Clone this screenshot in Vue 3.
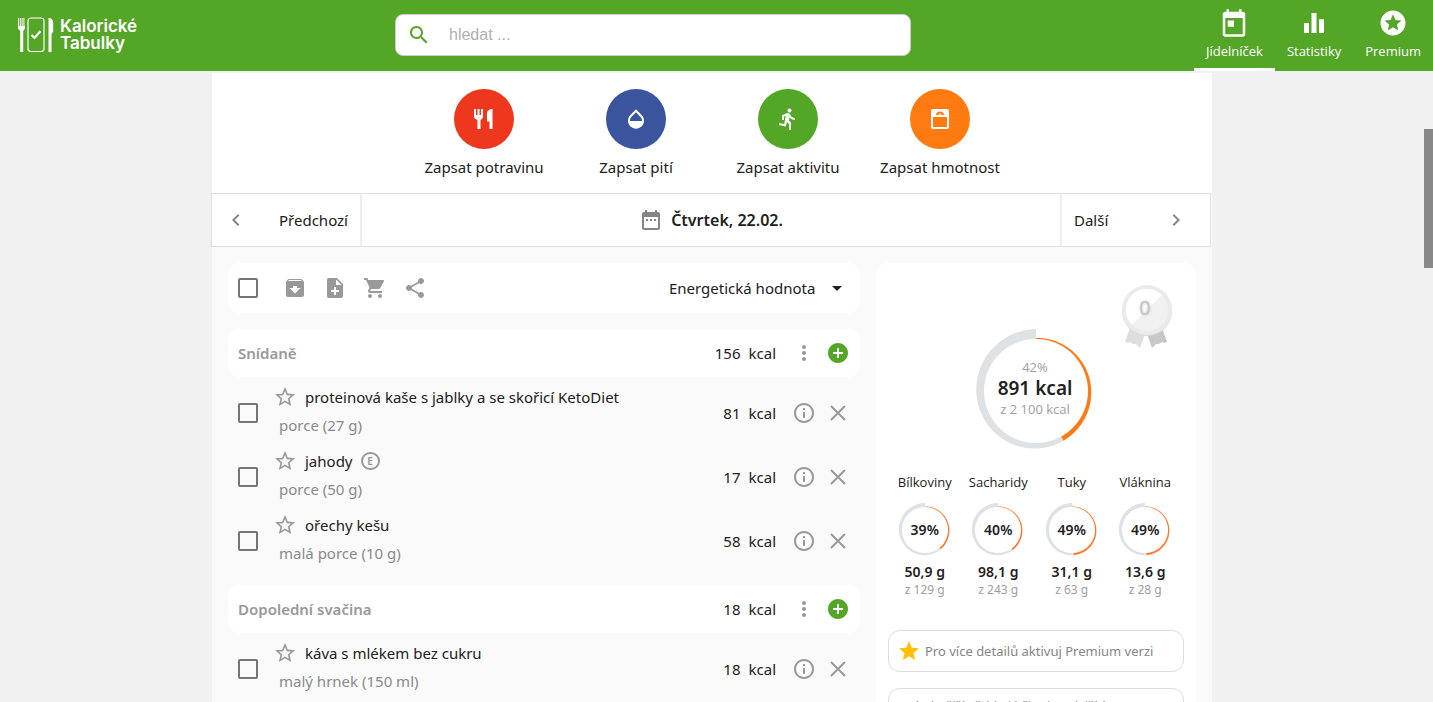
<script setup>
import { ref } from 'vue'

const query = ref('')

const icons = {
  today: 'M19 3h-1V1h-2v2H8V1H6v2H5c-1.1 0-2 .9-2 2v16c0 1.1.9 2 2 2h14c1.1 0 2-.9 2-2V5c0-1.1-.9-2-2-2zm0 18H5V8h14v13zM7 10h5v5H7z',
  stats: 'M4 12h4v8H4zM10 4h4v16h-4zM16 9h4v11h-4z',
  stars: 'M11.99 2C6.47 2 2 6.48 2 12s4.470 10 9.990 10C17.520 22 22 17.520 22 12S17.520 2 11.990 2zm4.240 16L12 15.450 7.770 18l1.120-4.810-3.730-3.230 4.920-.42L12 5l1.920 4.530 4.920.42-3.730 3.230L16.230 18z',
  food: 'M2 2h2v6h1.500V2h2v6H9V2h2v7.500c0 1.500-1 2.800-2.500 3.200V22H5.500v-9.300C3 12.300 2 11 2 9.500zM20.500 2v20h-3v-7.500H15V7c0-3 2-5 5.500-5z',
  drop: 'M17.660 8L12 2.350 6.340 8C4.780 9.560 4 11.640 4 13.640s.78 4.110 2.340 5.670 3.610 2.350 5.660 2.350 4.100-.79 5.660-2.350S20 15.640 20 13.640 19.220 9.560 17.660 8zM6 14c.01-2 .62-3.270 1.760-4.400L12 5.270l4.240 4.380C17.380 10.770 17.990 12 18 14H6z',
  run: 'M13.490 5.480c1.100 0 2-.9 2-2s-.9-2-2-2-2 .9-2 2 .9 2 2 2zm-3.600 13.900l1-4.400 2.100 2v6h2v-7.500l-2.100-2 .6-3c1.300 1.500 3.300 2.500 5.500 2.500v-2c-1.900 0-3.500-1-4.300-2.400l-1-1.600c-.4-.6-1-1-1.700-1-.3 0-.5.1-.8.1l-5.200 2.200v4.700h2v-3.400l1.800-.7-1.600 8.100-4.900-1-.4 2 7 1.400z',
  scale: 'M5 2h14c1.100 0 2 .9 2 2v16c0 1.100-.9 2-2 2H5c-1.100 0-2-.9-2-2V4c0-1.100.9-2 2-2zm0 8v10h14V10zM8 8h3l.6-2h.8l.6 2h3c0-2-1.800-3.400-4-3.400S8 6 8 8z',
  search: 'M15.500 14h-.79l-.28-.27C15.410 12.590 16 11.110 16 9.500 16 5.910 13.090 3 9.500 3S3 5.910 3 9.500 5.910 16 9.500 16c1.610 0 3.090-.59 4.230-1.570l.27.28v.79l5 4.990L20.490 19l-4.990-5zm-6 0C7.010 14 5 11.990 5 9.500S7.010 5 9.500 5 14 7.010 14 9.500 11.990 14 9.500 14z',
  left: 'M15.410 7.410L14 6l-6 6 6 6 1.410-1.410L10.830 12z',
  right: 'M8.590 16.590L10 18l6-6-6-6-1.410 1.410L13.170 12z',
  range: 'M19 4h-1V2h-2v2H8V2H6v2H5c-1.110 0-2 .9-2 2v14c0 1.100.89 2 2 2h14c1.100 0 2-.9 2-2V6c0-1.100-.9-2-2-2zm0 16H5V9h14v11zM7 11h2v2H7zM11 11h2v2h-2zM15 11h2v2h-2z',
  archive: 'M20.540 5.230l-1.390-1.680C18.880 3.210 18.470 3 18 3H6c-.47 0-.88.21-1.160.55L3.460 5.230C3.170 5.570 3 6.020 3 6.500V19c0 1.100.9 2 2 2h14c1.100 0 2-.9 2-2V6.500c0-.48-.17-.93-.46-1.270zM12 17.500L6.500 12H10v-2h4v2h3.500L12 17.500zM5.120 5l.81-1h12l.94 1H5.120z',
  note: 'M14 2H6c-1.100 0-1.990.9-1.990 2L4 20c0 1.100.89 2 1.990 2H18c1.100 0 2-.9 2-2V8l-6-6zm2 14h-3v3h-2v-3H8v-2h3v-3h2v3h3v2zm-3-7V3.500L18.500 9H13z',
  cart: 'M7 18c-1.100 0-1.990.9-1.990 2S5.900 22 7 22s2-.9 2-2-.9-2-2-2zM1 2v2h2l3.600 7.590-1.350 2.450c-.16.28-.25.61-.25.96 0 1.100.9 2 2 2h12v-2H7.420c-.14 0-.25-.11-.25-.25l.03-.12.900-1.630h7.450c.75 0 1.410-.41 1.750-1.030l3.580-6.490A1 1 0 0 0 20 4H5.210l-.94-2H1zm16 16c-1.100 0-1.990.9-1.990 2s.89 2 1.990 2 2-.9 2-2-.9-2-2-2z',
  share: 'M18 16.080c-.76 0-1.440.3-1.960.77L8.910 12.700c.05-.23.09-.46.09-.7s-.04-.47-.09-.7l7.050-4.110c.54.5 1.250.81 2.040.81 1.660 0 3-1.340 3-3s-1.340-3-3-3-3 1.340-3 3c0 .24.04.47.09.7L8.040 9.810C7.500 9.310 6.790 9 6 9c-1.660 0-3 1.340-3 3s1.340 3 3 3c.79 0 1.500-.31 2.040-.81l7.120 4.160c-.05.21-.08.43-.08.65 0 1.610 1.310 2.920 2.920 2.920s2.920-1.310 2.920-2.920-1.310-2.920-2.920-2.920z',
  more: 'M12 8c1.100 0 2-.9 2-2s-.9-2-2-2-2 .9-2 2 .9 2 2 2zm0 2c-1.100 0-2 .9-2 2s.9 2 2 2 2-.9 2-2-.9-2-2-2zm0 6c-1.100 0-2 .9-2 2s.9 2 2 2 2-.9 2-2-.9-2-2-2z',
  add: 'M12 2C6.480 2 2 6.480 2 12s4.480 10 10 10 10-4.480 10-10S17.520 2 12 2zm5 11h-4v4h-2v-4H7v-2h4V7h2v4h4v2z',
  starLine: 'M22 9.240l-7.190-.62L12 2 9.190 8.630 2 9.240l5.460 4.730L5.820 21 12 17.270 18.180 21l-1.630-7.030L22 9.240zM12 15.400l-3.760 2.270 1-4.280-3.320-2.880 4.380-.38L12 6.100l1.710 4.040 4.380.38-3.320 2.880 1 4.280L12 15.400z',
  star: 'M12 17.270L18.180 21l-1.640-7.030L22 9.240l-7.190-.61L12 2 9.190 8.630 2 9.240l5.460 4.730L5.820 21z',
  info: 'M11 7h2v2h-2zm0 4h2v6h-2zm1-9C6.480 2 2 6.480 2 12s4.480 10 10 10 10-4.480 10-10S17.520 2 12 2zm0 18c-4.410 0-8-3.590-8-8s3.590-8 8-8 8 3.590 8 8-3.590 8-8 8z'
}

const nav = [
  { label: 'Jídelníček', icon: 'today', active: true },
  { label: 'Statistiky', icon: 'stats' },
  { label: 'Premium', icon: 'stars' }
]

const actions = [
  { label: 'Zapsat potravinu', icon: 'food', tone: 'red' },
  { label: 'Zapsat pití', icon: 'drop', tone: 'blue' },
  { label: 'Zapsat aktivitu', icon: 'run', tone: 'green' },
  { label: 'Zapsat hmotnost', icon: 'scale', tone: 'orange' }
]

const tools = [
  { label: 'Archivovat', icon: 'archive' },
  { label: 'Nová poznámka', icon: 'note' },
  { label: 'Do košíku', icon: 'cart' },
  { label: 'Sdílet', icon: 'share' }
]

const meals = [
  {
    name: 'Snídaně',
    kcal: 156,
    items: [
      { name: 'proteinová kaše s jablky a se skořicí KetoDiet', portion: 'porce (27 g)', kcal: 81 },
      { name: 'jahody', portion: 'porce (50 g)', kcal: 17, badge: 'E' },
      { name: 'ořechy kešu', portion: 'malá porce (10 g)', kcal: 58 }
    ]
  },
  {
    name: 'Dopolední svačina',
    kcal: 18,
    items: [{ name: 'káva s mlékem bez cukru', portion: 'malý hrnek (150 ml)', kcal: 18 }]
  }
]

const nutrients = [
  { name: 'Bílkoviny', percent: 39, value: '50,9 g', goal: 'z 129 g' },
  { name: 'Sacharidy', percent: 40, value: '98,1 g', goal: 'z 243 g' },
  { name: 'Tuky', percent: 49, value: '31,1 g', goal: 'z 63 g' },
  { name: 'Vláknina', percent: 49, value: '13,6 g', goal: 'z 28 g' }
]

// Ring segment whose thickness grows clockwise from the top
function ring(from, to, center, inner, thin, thick) {
  const point = (t, r) => {
    const a = t * 2 * Math.PI
    return `${(center + r * Math.sin(a)).toFixed(2)} ${(center - r * Math.cos(a)).toFixed(2)}`
  }
  const steps = 60
  const outerEdge = []
  const innerEdge = []
  for (let i = 0; i <= steps; i++) {
    const t = from + ((to - from) * i) / steps
    outerEdge.push(point(t, inner + thin + (thick - thin) * t))
    innerEdge.unshift(point(t, inner))
  }
  return `M${outerEdge.concat(innerEdge).join('L')}Z`
}
</script>

<template>
  <div class="page">
    <header class="header">
      <a href="#" class="logo">
        <svg class="logo-mark" viewBox="0 0 36 36" aria-hidden="true">
          <path fill="#fff" d="M0 1h1.200v8h1V1h1.200v8h1V1h1.200v8h1V1h.4v10.500L5.200 14v21H2.200V14L0 11.500zM30.500 1c3 0 4.700 1.700 4.700 5v9l-1.700 2v18h-3z" />
          <rect x="10" y="1" width="16" height="33.500" rx="3" fill="none" stroke="#fff" stroke-width="1.200" />
          <path d="M13.500 18l3 3 6-7" fill="none" stroke="#fff" stroke-width="2.200" />
        </svg>
        <span class="logo-name"><span>Kalorické</span><span>Tabulky</span></span>
      </a>
      <label class="search">
        <svg class="icon" viewBox="0 0 24 24" aria-hidden="true"><path :d="icons.search" /></svg>
        <input v-model="query" type="text" placeholder="hledat ..." aria-label="hledat" />
      </label>
      <nav class="nav">
        <a v-for="n in nav" :key="n.label" href="#" :class="{ active: n.active }">
          <svg class="nav-icon" viewBox="0 0 24 24" aria-hidden="true"><path fill-rule="evenodd" :d="icons[n.icon]" /></svg>
          <span>{{ n.label }}</span>
        </a>
      </nav>
    </header>

    <main class="main">
      <section class="actions">
        <button v-for="a in actions" :key="a.label" type="button">
          <span class="disc" :class="a.tone">
            <svg class="icon" viewBox="0 0 24 24" aria-hidden="true"><path fill-rule="evenodd" :d="icons[a.icon]" /></svg>
          </span>
          <span>{{ a.label }}</span>
        </button>
      </section>

      <section class="dates">
        <button type="button" class="step">
          <svg class="icon" viewBox="0 0 24 24" aria-hidden="true"><path :d="icons.left" /></svg>
          <span>Předchozí</span>
        </button>
        <button type="button" class="day">
          <svg class="icon" viewBox="0 0 24 24" aria-hidden="true"><path fill-rule="evenodd" :d="icons.range" /></svg>
          <span>Čtvrtek, 22.02.</span>
        </button>
        <button type="button" class="step">
          <span>Další</span>
          <svg class="icon" viewBox="0 0 24 24" aria-hidden="true"><path :d="icons.right" /></svg>
        </button>
      </section>

      <div class="content">
        <div class="diary">
          <div class="toolbar">
            <input type="checkbox" class="check" aria-label="Vybrat vše" />
            <div class="tools">
              <button v-for="t in tools" :key="t.icon" type="button" :aria-label="t.label">
                <svg class="icon" viewBox="0 0 24 24" aria-hidden="true"><path fill-rule="evenodd" :d="icons[t.icon]" /></svg>
              </button>
            </div>
            <div class="picker">
              <select aria-label="Zobrazená hodnota">
                <option>Energetická hodnota</option>
              </select>
              <svg viewBox="0 0 10 5" aria-hidden="true"><path d="M0 0h10L5 5z" /></svg>
            </div>
          </div>

          <section v-for="m in meals" :key="m.name" class="meal">
            <div class="meal-head">
              <h2>{{ m.name }}</h2>
              <span class="kcal"><span>{{ m.kcal }}</span><span>kcal</span></span>
              <button type="button" class="first" aria-label="Další možnosti">
                <svg class="icon" viewBox="0 0 24 24" aria-hidden="true"><path :d="icons.more" /></svg>
              </button>
              <button type="button" class="add" aria-label="Přidat">
                <svg class="icon" viewBox="0 0 24 24" aria-hidden="true"><path :d="icons.add" /></svg>
              </button>
            </div>
            <div v-for="i in m.items" :key="i.name" class="item">
              <input type="checkbox" class="check" :aria-label="i.name" />
              <div class="food">
                <div class="title">
                  <button type="button" aria-label="Oblíbené">
                    <svg class="icon" viewBox="0 0 24 24" aria-hidden="true"><path fill-rule="evenodd" :d="icons.starLine" /></svg>
                  </button>
                  <span>{{ i.name }}</span>
                  <span v-if="i.badge" class="badge">{{ i.badge }}</span>
                </div>
                <div class="portion">{{ i.portion }}</div>
              </div>
              <span class="kcal"><span>{{ i.kcal }}</span><span>kcal</span></span>
              <button type="button" class="first" aria-label="Informace">
                <svg class="icon" viewBox="0 0 24 24" aria-hidden="true"><path :d="icons.info" /></svg>
              </button>
              <button type="button" aria-label="Odebrat">
                <svg class="icon" viewBox="0 0 24 24" aria-hidden="true">
                  <path d="M5 5l14 14M19 5L5 19" fill="none" stroke="currentColor" stroke-width="2" />
                </svg>
              </button>
            </div>
          </section>
        </div>

        <aside class="summary">
          <div class="medal">
            <svg viewBox="0 0 52 64" aria-hidden="true">
              <path fill="#dedede" d="M10 40L4 57l3 1 2-1 3 2 3 0 4 4 6-17z" />
              <path fill="#c8c8c8" d="M40 40l6 17-3 1-2-1-3 2-3 0-4 4-6-17z" />
              <circle cx="26" cy="26" r="25" fill="#dadada" />
              <circle cx="26" cy="25" r="25" fill="#ebebeb" />
              <circle cx="26" cy="25" r="21" fill="#f1f1f1" />
              <path fill="#fff" d="M11 39.700A21 21 0 0 1 40.700 10z" />
            </svg>
            <span>0</span>
          </div>
          <div class="gauge big">
            <svg viewBox="0 0 126 126" aria-hidden="true">
              <path fill="#dee2e5" :d="ring(0.42, 1, 63, 52, 1, 10)" />
              <path fill="#ff7a14" :d="ring(0, 0.42, 63, 52, 1, 10)" />
            </svg>
            <div class="gauge-text">
              <span class="muted">42%</span>
              <strong>891 kcal</strong>
              <span class="muted">z 2 100 kcal</span>
            </div>
          </div>
          <div class="nutrients">
            <div v-for="n in nutrients" :key="n.name" class="nutrient">
              <span class="nutrient-name">{{ n.name }}</span>
              <div class="gauge small">
                <svg viewBox="0 0 56 56" aria-hidden="true">
                  <path fill="#dee2e5" :d="ring(n.percent / 100, 1, 28, 23, 0.5, 4)" />
                  <path fill="#ff7a30" :d="ring(0, n.percent / 100, 28, 23, 0.5, 4)" />
                </svg>
                <div class="gauge-text"><strong>{{ n.percent }}%</strong></div>
              </div>
              <strong>{{ n.value }}</strong>
              <span class="muted">{{ n.goal }}</span>
            </div>
          </div>
          <a href="#" class="promo">
            <svg class="icon" viewBox="0 0 24 24" aria-hidden="true"><path :d="icons.star" /></svg>
            <span>Pro více detailů aktivuj Premium verzi</span>
          </a>
          <div class="tip">Podrobnější přehled bílkovin a dalších</div>
        </aside>
      </div>
    </main>
    <div class="scroll-thumb" aria-hidden="true"></div>
  </div>
</template>

<style>
body {
  background: #f1f1f1;
}
</style>

<style scoped>
.page,
.page * {
  box-sizing: border-box;
}
.page {
  position: relative;
  height: 100vh;
  padding-right: 9px;
  overflow: hidden;
  background: #f1f1f1;
  color: #212121;
  font: 15px/20px "Noto Sans", "Open Sans", sans-serif;
}
button {
  padding: 0;
  border: 0;
  background: none;
  color: inherit;
  font: inherit;
  cursor: pointer;
}
a {
  color: inherit;
  text-decoration: none;
}
svg {
  display: block;
  fill: currentColor;
}
.icon {
  width: 24px;
  height: 24px;
  flex: none;
}
.muted {
  color: #9e9e9e;
}
.header {
  display: grid;
  grid-template-columns: 395px minmax(0, 516px) 1fr;
  align-items: center;
  height: 71px;
  margin-right: -9px;
  background: #54a627;
  color: #fff;
}
.logo {
  display: flex;
  align-items: center;
  gap: 6px;
  padding: 0 0 2px 18px;
  font: 600 17px/17px Inter, "Open Sans", sans-serif;
}
.logo-mark {
  width: 36px;
  height: 36px;
}
.logo-name {
  display: flex;
  flex-direction: column;
}
.search {
  display: flex;
  align-items: center;
  gap: 18px;
  height: 42px;
  margin-bottom: 2px;
  padding: 0 12px 0 11px;
  border: 1px solid #ccc;
  border-radius: 8px;
  background: #fff;
  color: #54a627;
}
.search input {
  flex: 1;
  min-width: 0;
  padding: 0;
  border: 0;
  outline: 0;
  background: none;
  color: #212121;
  font: 16px/20px "Liberation Sans", Arial, sans-serif;
}
.search input::placeholder {
  color: #b0b0b0;
}
.nav {
  display: flex;
  justify-content: flex-end;
  align-self: stretch;
  font-family: "Open Sans", sans-serif;
  font-size: 13px;
}
.nav a {
  display: flex;
  flex-direction: column;
  align-items: center;
  gap: 3px;
  padding: 8px 12px 0;
  border-bottom: 3px solid transparent;
}
.nav a.active {
  border-color: #fff;
}
.nav-icon {
  width: 30px;
  height: 30px;
}
.main {
  width: 1000px;
  max-width: 100%;
  margin: 2px auto 0;
  background: #fafafa;
}
.actions {
  display: flex;
  justify-content: center;
  padding: 16px 0;
  background: #fff;
}
.actions button {
  display: flex;
  flex-direction: column;
  align-items: center;
  gap: 8px;
  width: 152px;
}
.disc {
  display: grid;
  place-items: center;
  width: 60px;
  height: 60px;
  border-radius: 50%;
  color: #fff;
}
.red { background: #ee381e; }
.blue { background: #3a549e; }
.green { background: #54a627; }
.orange { background: #ff7a10; }
.dates {
  display: flex;
  height: 54px;
  margin: 0 1px 0 -1px;
  border: 1px solid #e0e0e0;
  background: #fff;
}
.step {
  display: flex;
  align-items: center;
  justify-content: space-between;
  width: 150px;
  padding: 0 12px;
}
.step:first-child {
  border-right: 2px solid #eee;
}
.step:last-child {
  border-left: 2px solid #eee;
  padding-right: 22px;
}
.dates .icon {
  color: #858585;
}
.day {
  display: flex;
  flex: 1;
  align-items: center;
  justify-content: center;
  gap: 8px;
  font-size: 16px;
  font-weight: 600;
}
.content {
  display: flex;
  gap: 16px;
  padding: 16px;
}
.diary {
  flex: 1;
  min-width: 0;
}
.toolbar {
  display: flex;
  align-items: center;
  height: 50px;
  margin-bottom: 16px;
  padding: 0 18px 0 10px;
  border-radius: 12px;
  background: #fff;
}
.check {
  appearance: none;
  flex: none;
  width: 20px;
  height: 20px;
  margin: 0;
  border: 2px solid #757575;
  border-radius: 2px;
}
.tools {
  display: flex;
  flex: 1;
  gap: 16px;
  margin-left: 25px;
  color: #999;
}
.picker {
  display: flex;
  align-items: center;
  gap: 16px;
}
.picker select {
  appearance: none;
  padding: 0;
  border: 0;
  background: none;
  color: inherit;
  font: inherit;
}
.picker svg {
  width: 10px;
  height: 5px;
}
.meal {
  padding-bottom: 12px;
}
.meal-head,
.item {
  display: flex;
  align-items: center;
  gap: 10px;
  padding: 0 10px;
}
.meal-head {
  height: 48px;
  margin-bottom: 4px;
  border-radius: 12px;
  background: #fff;
}
h2 {
  flex: 1;
  margin: 0;
  color: #999;
  font: inherit;
  font-weight: 600;
}
.item {
  height: 64px;
}
.meal-head button,
.item button {
  color: #999;
}
.meal-head .add {
  color: #54a627;
}
.kcal {
  display: flex;
  gap: 8px;
}
.meal-head .first,
.item .first {
  margin-left: 6px;
}
.food {
  flex: 1;
  padding: 0 0 4px 5px;
}
.title {
  display: flex;
  align-items: center;
  gap: 8px;
  height: 28px;
}
.portion {
  height: 28px;
  padding-left: 6px;
  color: #8a8a8a;
  line-height: 28px;
}
.badge {
  width: 19px;
  height: 18px;
  border: 2px solid #999;
  border-radius: 9px;
  color: #999;
  font-size: 10px;
  font-weight: 600;
  line-height: 14px;
  text-align: center;
}
.summary {
  position: relative;
  width: 320px;
  padding: 65px 12px 16px;
  border-radius: 12px;
  background: #fff;
}
.medal {
  position: absolute;
  top: 22px;
  right: 23px;
  width: 52px;
}
.medal span {
  position: absolute;
  inset: 13px 4px auto 0;
  color: #c4c4c4;
  font-size: 20px;
  text-align: center;
  text-shadow: 0 0 3px #ccc;
}
.gauge {
  position: relative;
  margin: 0 auto;
}
.big {
  width: 126px;
  height: 126px;
}
.small {
  width: 56px;
  height: 56px;
}
.gauge-text {
  position: absolute;
  inset: 0;
  display: flex;
  flex-direction: column;
  align-items: center;
  justify-content: center;
}
.big .gauge-text {
  padding: 0 2px 7px 0;
  font-family: "Open Sans", sans-serif;
  font-size: 13px;
  line-height: 20px;
}
.big strong {
  font-family: "Noto Sans", sans-serif;
  font-size: 19px;
  line-height: 22px;
}
strong {
  font-weight: 600;
}
.nutrients {
  display: flex;
  margin: 18px 2px 0 0;
}
.nutrient {
  display: flex;
  flex: 1;
  flex-direction: column;
  align-items: center;
  font-size: 12px;
  line-height: 18px;
}
.nutrient strong {
  font-size: 14px;
}
.nutrient-name {
  margin-bottom: 10px;
  font-family: "Open Sans", sans-serif;
  font-size: 13px;
  line-height: 20px;
}
.nutrient .gauge {
  margin-bottom: 5px;
}
.promo,
.tip {
  display: flex;
  align-items: center;
  height: 42px;
  padding: 0 8px;
  border: 1px solid #ddd;
  border-radius: 12px;
  color: #858585;
  font-size: 13px;
}
.promo {
  gap: 4px;
  margin: 31px 0 16px;
}
.promo .icon {
  color: #ffc107;
}
.tip {
  align-items: flex-start;
  padding-top: 8px;
  font-size: 12px;
}
.scroll-thumb {
  position: absolute;
  top: 129px;
  right: 0;
  width: 9px;
  height: 139px;
  background: #888;
}
</style>
